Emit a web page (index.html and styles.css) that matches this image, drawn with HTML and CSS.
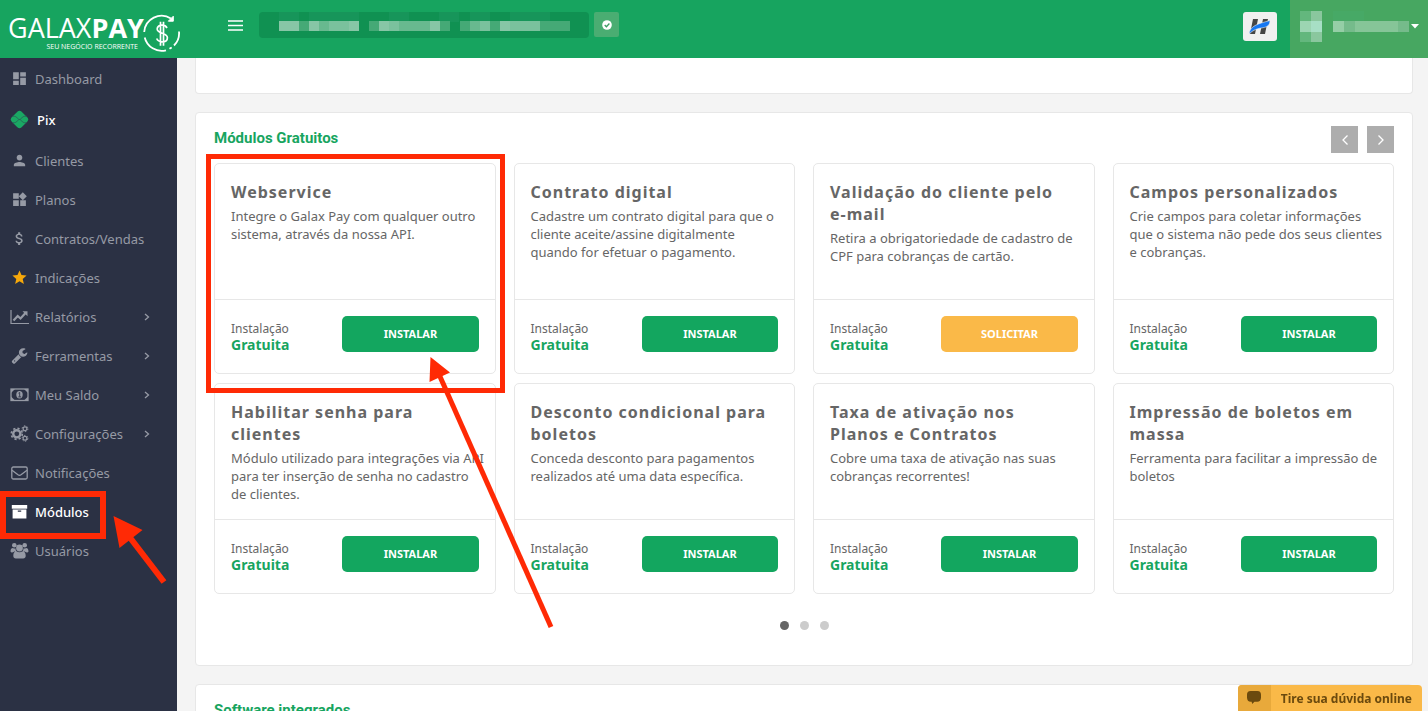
FILE: index.html
```html
<!DOCTYPE html>
<html lang="pt-BR">
<head>
<meta charset="utf-8">
<title>Galax Pay - Módulos</title>
<link rel="stylesheet" href="styles.css">
</head>
<body>
<header class="topbar">
  <a class="brand" href="#" aria-label="Galax Pay">
    <span class="brand-text">
      <span class="brand-name">GALAX<b>PAY</b></span>
      <span class="brand-tag">SEU NEGÓCIO RECORRENTE</span>
    </span>
    <svg class="brand-mark" viewBox="0 0 38 38" fill="none" stroke="#fff">
      <path d="M28 4.500A17.500 17.500 0 0 0 1.200 18M1.700 23.500A17.500 17.500 0 0 0 23 36.300M26.500 34.800l2.200-1.400M31 31.500A17.500 17.500 0 0 0 36 17.500" stroke-width="1.800"/>
      <path d="M30.300 2.200v5h-5z" fill="#fff" stroke-width="1"/>
      <path d="M24 14c-1-2-2.700-2.800-5-2.800-2.900 0-4.800 1.500-4.800 3.900 0 5.200 10.200 3 10.200 8.600 0 2.500-2.200 4.100-5.200 4.100-2.800 0-4.600-1.100-5.500-3.300M17.500 7.700v24M20.500 7.700v24" stroke-width="1.700"/>
    </svg>
  </a>
  <button class="menu-btn" aria-label="Menu"><svg viewBox="0 0 15 11"><path d="M0 1h15M0 5.500h15M0 10h15" stroke="#fff" stroke-width="1.500"/></svg></button>
  <div class="account">
    <svg viewBox="0 0 330 26" shape-rendering="crispEdges">
      <g fill="#17955a"><path d="M20 0h20v10h-20zM50 0h50v10h-50zM130 0h20v10h-20zM180 0h20v10h-20zM211 0h20v10h-20zM251 0h40v10h-40z"/></g>
      <path fill="#87c6a6" d="M20 9h20v10h-20zM50 9h10v10h-10zM90 9h10v10h-10zM120 9h10v10h-10zM171 9h10v10h-10zM241 9h10v10h-10z"/>
      <path fill="#7ac19d" d="M70 9h20v10h-20zM130 9h10v10h-10zM221 9h10v10h-10zM251 9h30v10h-30z"/>
      <path fill="#68b98f" d="M60 9h10v10h-10zM140 9h31v10h-31zM211 9h10v10h-10z"/>
      <path fill="#45a976" d="M40 9h10v10h-10zM110 9h10v10h-10zM181 9h10v10h-10zM201 9h10v10h-10zM231 9h10v10h-10zM281 9h30v10h-30z"/>
    </svg>
  </div>
  <button class="check-btn" aria-label="Verificado"><svg viewBox="0 0 10 10"><circle cx="5" cy="5" r="4.800" fill="#fff"/><path d="M2.700 5l1.700 1.700 3-3.200" fill="none" stroke="#3c9c62" stroke-width="1.300"/></svg></button>
  <a class="partner" href="#" aria-label="Parceiro">
    <svg viewBox="0 0 22 17"><path d="M4 1h5L6 16H1zM14 1h5l-3 15h-5z" fill="#454545"/><path d="M0 16C1 8 8 6 21 2.500c0 4.500-2.500 6.500-7 7.200C8 10.500 4 12 0 16z" fill="#1677f2" stroke="#eee" stroke-width=".6"/></svg>
  </a>
  <button class="user" aria-label="Conta">
    <svg viewBox="0 0 110 32" shape-rendering="crispEdges">
      <path fill="#63b77d" d="M0 0h11v11H0zM0 21h11v10H0z"/><path fill="#8ac79e" d="M11 0h11v11H11zM11 21h11v10H11z"/>
      <path fill="#9cd5b2" d="M0 10h11v11H0z"/><path fill="#a7dfc5" d="M11 10h11v11H11z"/>
      <path fill="#95cea6" d="M33 10h11v11H33z"/><path fill="#86c598" d="M44 10h54v11H44z"/><path fill="#75bb8b" d="M98 10h11v11H98zM44 10h11v11H44z"/>
      <path fill="#47a966" d="M33 0h31v10H33z"/>
    </svg>
    <svg class="caret" viewBox="0 0 8 5"><path d="M0 0h8L4 4.500z" fill="#fff"/></svg>
  </button>
</header>

<div class="shell">
  <nav class="sidebar">
    <ul class="menu">
      <li><a href="#"><span class="icon"><svg class="md" viewBox="0 0 24 24"><path d="M3 13h8V3H3v10zm0 8h8v-6H3v6zm10 0h8V11h-8v10zm0-18v6h8V3h-8z"/></svg></span>Dashboard</a></li>
      <li><a class="pix active" href="#"><span class="icon"><svg class="fa" viewBox="0 0 20 20"><rect x="2.700" y="2.700" width="14.600" height="14.600" rx="3.200" transform="rotate(45 10 10)" fill="#1aa864"/><path d="M2 6.600h2.600c1.200 0 2 .8 2.800 1.500L9 9.600c.6.500 1.400.5 2 0l1.600-1.500c.8-.7 1.600-1.500 2.800-1.500H18M2 13.400h2.600c1.200 0 2-.8 2.800-1.500L9 10.400c.6-.5 1.400-.5 2 0l1.600 1.500c.8.700 1.600 1.500 2.800 1.500H18" fill="none" stroke="#2b5b54" stroke-width=".8"/></svg></span>Pix</a></li>
      <li><a href="#"><span class="icon"><svg class="md" viewBox="0 0 24 24"><path d="M12 12c2.210 0 4-1.790 4-4s-1.790-4-4-4-4 1.790-4 4 1.790 4 4 4zm0 2c-2.670 0-8 1.340-8 4v2h16v-2c0-2.660-5.330-4-8-4z"/></svg></span>Clientes</a></li>
      <li><a href="#"><span class="icon"><svg class="md" viewBox="0 0 24 24"><path d="M13 13v8h8v-8h-8zM3 21h8v-8H3v8zM3 3v8h8V3H3zm13.660-1.310L11 7.340 16.660 13l5.660-5.660-5.660-5.650z"/></svg></span>Planos</a></li>
      <li><a href="#"><span class="icon"><svg class="md" viewBox="0 0 24 24"><path d="M11.800 10.900c-2.270-.59-3-1.200-3-2.150 0-1.090 1.010-1.850 2.700-1.850 1.780 0 2.440.85 2.500 2.100h2.210c-.07-1.720-1.120-3.300-3.210-3.810V3h-3v2.160c-1.940.42-3.500 1.680-3.500 3.610 0 2.310 1.910 3.460 4.700 4.130 2.500.6 3 1.480 3 2.410 0 .69-.49 1.790-2.700 1.790-2.060 0-2.870-.92-2.980-2.100h-2.200c.12 2.190 1.760 3.420 3.680 3.830V21h3v-2.150c1.950-.37 3.500-1.500 3.500-3.550 0-2.840-2.430-3.810-4.700-4.400z"/></svg></span>Contratos/Vendas</a></li>
      <li><a href="#"><span class="icon star"><svg class="md" viewBox="0 0 24 24"><path d="M12 17.270L18.180 21l-1.640-7.030L22 9.240l-7.190-.61L12 2 9.190 8.630 2 9.240l5.460 4.730L5.820 21z"/></svg></span>Indicações</a></li>
      <li><a href="#"><span class="icon"><svg class="fa" viewBox="0 0 19 19"><path d="M1 3v13.500h18" fill="none" stroke="currentColor" stroke-width="1.200"/><path d="M3.500 13.500l4.200-4.500 2.800 2.500 5-5.500" fill="none" stroke="currentColor" stroke-width="2.200"/><path d="M12.500 4.200h5v5z"/></svg></span>Relatórios<svg class="arrow" viewBox="0 0 6 8"><path d="M1 1l3.500 3L1 7"/></svg></a></li>
      <li><a href="#"><span class="icon"><svg class="md" viewBox="0 0 1792 1792"><path d="M448 1472q0-26-19-45t-45-19-45 19-19 45 19 45 45 19 45-19 19-45zm644-420l-682 682q-37 37-90 37-52 0-91-37l-106-108q-38-36-38-90 0-53 38-91l681-681q39 98 114.500 173.500t173.500 114.500zm634-435q0 39-23 106-47 134-164.500 217.500t-258.500 83.500q-185 0-316.500-131.500t-131.500-316.500 131.500-316.500 316.500-131.500q58 0 121.500 16.500t107.500 46.500q16 11 16 28t-16 28l-293 169v224l193 107q5-3 79-48.500t135.500-81 70.500-35.500q15 0 23.500 10t8.500 25z"/></svg></span>Ferramentas<svg class="arrow" viewBox="0 0 6 8"><path d="M1 1l3.500 3L1 7"/></svg></a></li>
      <li><a href="#"><span class="icon"><svg class="fa" viewBox="0 0 19 19"><rect x="1" y="4" width="17" height="11.500" fill="none" stroke="currentColor" stroke-width="1.300"/><path d="M1 4h4L1 8zM18 4v4l-4-4zM1 15.500v-4l4 4zM18 15.500h-4l4-4z"/><ellipse cx="9.500" cy="9.700" rx="3.200" ry="3.700"/><path d="M8.500 8.200l1.200-.7v4.200M8.300 11.900h2.800" fill="none" stroke="#2b3144" stroke-width=".9"/></svg></span>Meu Saldo<svg class="arrow" viewBox="0 0 6 8"><path d="M1 1l3.500 3L1 7"/></svg></a></li>
      <li><a href="#"><span class="icon"><svg class="fa" viewBox="0 0 19 19"><g fill="none" stroke="currentColor"><circle cx="6.800" cy="9.800" r="3.600" stroke-width="2.400"/><circle cx="6.800" cy="9.800" r="5.500" stroke-width="1.700" stroke-dasharray="2.160 2.160"/><circle cx="15" cy="4.700" r="1.900" stroke-width="1.200"/><circle cx="15" cy="4.700" r="2.900" stroke-width="1" stroke-dasharray="1.520 1.520"/><circle cx="15" cy="14.300" r="1.900" stroke-width="1.200"/><circle cx="15" cy="14.300" r="2.900" stroke-width="1" stroke-dasharray="1.520 1.520"/></g></svg></span>Configurações<svg class="arrow" viewBox="0 0 6 8"><path d="M1 1l3.500 3L1 7"/></svg></a></li>
      <li><a href="#"><span class="icon"><svg class="fa" viewBox="0 0 19 19"><rect x="1.800" y="4" width="15.400" height="12" rx="1.500" fill="none" stroke="currentColor" stroke-width="1.300"/><path d="M2 7.200l6 4.600q1.500 1 3 0l6-4.600" fill="none" stroke="currentColor" stroke-width="1.300"/></svg></span>Notificações</a></li>
      <li><a class="active" href="#"><span class="icon"><svg class="fa" viewBox="0 0 19 19"><path d="M1.800 3h15.400v3.700H1.800z"/><path fill-rule="evenodd" d="M2.600 7.500h13.800v9H2.600zM7.800 8.400v1.300h3.400V8.400z"/></svg></span>Módulos</a></li>
      <li><a href="#"><span class="icon"><svg class="fa" viewBox="0 0 19 19"><circle cx="4.300" cy="4.300" r="2.300"/><circle cx="14.700" cy="4.300" r="2.300"/><circle cx="9.500" cy="7" r="3.400"/><path d="M.5 10.500C.5 8 1.500 7 3 7c.9.600 1.800.6 2.500.3 0 1.500.5 2.500 1.200 3.200H4.300C3 11.500 1 12 .5 10.500zM18.500 10.500C18.500 8 17.500 7 16 7c-.9.600-1.800.6-2.500.3 0 1.500-.5 2.500-1.200 3.200h2.400c1.300 1 3.300 1.500 3.800 0zM3.300 14.800c0-3 1.200-4.600 3.200-4.600 1.800 1.500 4.200 1.500 6 0 2 0 3.200 1.600 3.200 4.600 0 1.700-1 2.700-2.500 2.700H5.800c-1.500 0-2.500-1-2.500-2.700z"/></svg></span>Usuários</a></li>
    </ul>
  </nav>

  <main class="content">
    <section class="panel panel-tail"></section>

    <section class="panel">
      <div class="panel-head">
        <h2>Módulos Gratuitos</h2>
        <div class="pager">
          <button aria-label="Anterior"><svg viewBox="0 0 8 12"><path d="M6.500 1.500L2 6l4.500 4.500"/></svg></button>
          <button aria-label="Próximo"><svg viewBox="0 0 8 12"><path d="M1.500 1.500L6 6l-4.500 4.500"/></svg></button>
        </div>
      </div>
      <div class="cards">
        <article class="card"><div class="card-body"><h3>Webservice</h3><p>Integre o Galax Pay com qualquer outro sistema, através da nossa API.</p></div><div class="card-foot"><div class="price">Instalação<strong>Gratuita</strong></div><button class="btn">INSTALAR</button></div></article>
        <article class="card"><div class="card-body"><h3>Contrato digital</h3><p>Cadastre um contrato digital para que o cliente aceite/assine digitalmente quando for efetuar o pagamento.</p></div><div class="card-foot"><div class="price">Instalação<strong>Gratuita</strong></div><button class="btn">INSTALAR</button></div></article>
        <article class="card"><div class="card-body"><h3>Validação do cliente pelo <span class="nowrap">e-mail</span></h3><p>Retira a obrigatoriedade de cadastro de CPF para cobranças de cartão.</p></div><div class="card-foot"><div class="price">Instalação<strong>Gratuita</strong></div><button class="btn btn-request">SOLICITAR</button></div></article>
        <article class="card"><div class="card-body"><h3>Campos personalizados</h3><p>Crie campos para coletar informações que o sistema não pede dos seus clientes e cobranças.</p></div><div class="card-foot"><div class="price">Instalação<strong>Gratuita</strong></div><button class="btn">INSTALAR</button></div></article>
        <article class="card"><div class="card-body"><h3>Habilitar senha para clientes</h3><p>Módulo utilizado para integrações via API para ter inserção de senha no cadastro de clientes.</p></div><div class="card-foot"><div class="price">Instalação<strong>Gratuita</strong></div><button class="btn">INSTALAR</button></div></article>
        <article class="card"><div class="card-body"><h3>Desconto condicional para boletos</h3><p>Conceda desconto para pagamentos realizados até uma data específica.</p></div><div class="card-foot"><div class="price">Instalação<strong>Gratuita</strong></div><button class="btn">INSTALAR</button></div></article>
        <article class="card"><div class="card-body"><h3>Taxa de ativação nos Planos e Contratos</h3><p>Cobre uma taxa de ativação nas suas cobranças recorrentes!</p></div><div class="card-foot"><div class="price">Instalação<strong>Gratuita</strong></div><button class="btn">INSTALAR</button></div></article>
        <article class="card"><div class="card-body"><h3>Impressão de boletos em massa</h3><p>Ferramenta para facilitar a impressão de boletos</p></div><div class="card-foot"><div class="price">Instalação<strong>Gratuita</strong></div><button class="btn">INSTALAR</button></div></article>
      </div>
      <div class="dots">
        <button class="dot current" aria-label="Página 1"></button>
        <button class="dot" aria-label="Página 2"></button>
        <button class="dot" aria-label="Página 3"></button>
      </div>
    </section>

    <section class="panel">
      <div class="panel-head"><h2>Software integrados</h2></div>
    </section>
  </main>
</div>

<button class="chat">
  <span class="chat-icon"><svg viewBox="0 0 15 15"><path d="M4 0h7c3 0 4 1.500 4 4v3c0 3-1.500 4.500-4 4.500H8L5.500 14 5 11.500H4c-2.500 0-4-1.500-4-4.500V4c0-2.500 1-4 4-4z"/></svg></span>
  <span class="chat-text">Tire sua dúvida online</span>
</button>

<!-- tutorial highlights -->
<svg class="marks" aria-hidden="true">
  <g fill="none" stroke="#ff2a05">
    <rect x="208.500" y="156.500" width="294" height="234" stroke-width="5"/>
    <rect x="3" y="494" width="100" height="42" stroke-width="6"/>
    <path d="M438 372L551 627" stroke-width="5"/>
    <path d="M128 535L164 582" stroke-width="6"/>
  </g>
  <path d="M430.500 357l19.500 15.500-20.500 9.500zM113.500 516l29 14-23 18z" fill="#ff2a05"/>
</svg>
</body>
</html>
```

FILE: styles.css
```css
* { box-sizing: border-box; }

body {
  margin: 0;
  height: 100vh;
  display: flex;
  flex-direction: column;
  overflow: hidden;
  background: #f4f4f4;
  font-family: "Noto Sans", sans-serif;
  font-size: 13px;
  color: #666;
}

button {
  border: 0;
  padding: 0;
  background: none;
  font: inherit;
  color: inherit;
  cursor: pointer;
}

a { color: inherit; text-decoration: none; }
h2, h3, p, ul { margin: 0; padding: 0; }
svg { display: block; }

/* top bar */
.topbar {
  flex: none;
  display: flex;
  align-items: flex-start;
  height: 58px;
  background: #17a45f;
}

.brand {
  display: flex;
  gap: 1px;
  width: 228px;
  padding: 13px 0 0 8px;
  color: #fff;
}

.brand-text { display: flex; flex-direction: column; width: 134px; }
.brand-name {
  font-family: "Open Sans", sans-serif;
  font-size: 27px;
  line-height: 29px;
  white-space: nowrap;
}
.brand-tag {
  align-self: flex-end;
  margin-right: 4px;
  font-family: "Open Sans", sans-serif;
  font-size: 7px;
  line-height: 9px;
  white-space: nowrap;
}
.brand-mark { width: 38px; height: 38px; margin-top: 1px; }

.menu-btn { width: 15px; margin-top: 20px; }
.menu-btn svg { width: 15px; height: 11px; }

.account {
  width: 330px;
  height: 26px;
  margin: 12px 5px 0 16px;
  border-radius: 4px;
  background: #109152;
}
.account svg { width: 330px; height: 26px; }

.check-btn {
  display: grid;
  place-items: center;
  width: 25px;
  height: 25px;
  margin-top: 12px;
  border-radius: 2px;
  background: #4aad72;
}
.check-btn svg { width: 10px; height: 10px; }

.partner {
  display: grid;
  place-items: center;
  width: 34px;
  height: 29px;
  margin: 12px 13px 0 auto;
  border-radius: 3px;
  background: #f0f0f0;
}
.partner svg { width: 22px; height: 17px; }

.user {
  display: flex;
  gap: 1px;
  width: 138px;
  height: 58px;
  padding: 11px 0 0 10px;
  background: #47a761;
}
.user svg { width: 110px; height: 32px; }
.user .caret { width: 8px; height: 5px; margin-top: 13px; }

/* layout */
.shell { flex: 1; display: flex; min-height: 0; }

.sidebar {
  flex: none;
  width: 177px;
  background: #2b3144;
}

.menu { list-style: none; padding-top: 1px; }
.menu a {
  display: flex;
  align-items: center;
  gap: 5px;
  height: 39px;
  padding: 0 27px 0 9px;
  color: #969aa5;
}
.menu .active { color: #fff; font-weight: 500; }
.menu .pix { height: 43px; gap: 7px; }

.icon { display: grid; place-items: center; width: 21px; }
.icon svg { fill: currentColor; }
.md { width: 17px; height: 17px; }
.fa { width: 19px; height: 19px; }
.star { color: #f6a80b; }
.arrow {
  width: 6px;
  height: 8px;
  margin-left: auto;
  fill: none;
  stroke: currentColor;
  stroke-width: 1.3;
}

.content {
  flex: 1;
  min-width: 0;
  display: flex;
  flex-direction: column;
  gap: 18px;
  padding: 0 15px 0 18px;
  overflow: hidden;
}

/* panels */
.panel {
  flex: none;
  padding: 13px 18px 35px;
  border: 1px solid #e7e7e7;
  border-radius: 4px;
  background: #fff;
}
.panel-tail { height: 36px; padding: 0; border-top: 0; border-radius: 0 0 4px 4px; }

.panel-head {
  display: flex;
  justify-content: space-between;
  min-height: 27px;
  margin-bottom: 10px;
}
.panel-head h2 {
  font-family: Roboto, sans-serif;
  font-size: 15px;
  font-weight: 700;
  line-height: 24px;
  color: #17a55f;
}

.pager { display: flex; gap: 9px; }
.pager button {
  display: grid;
  place-items: center;
  width: 27px;
  height: 27px;
  background: #adadad;
}
.pager svg {
  width: 8px;
  height: 12px;
  fill: none;
  stroke: #fff;
  stroke-width: 1.3;
}

/* module cards */
.cards {
  display: grid;
  grid-template-columns: repeat(4, 1fr);
  gap: 9px 18px;
}
.card {
  display: flex;
  flex-direction: column;
  border: 1px solid #e7e7e7;
  border-radius: 5px;
}
.card-body {
  flex: 1;
  min-height: 136px;
  padding: 17px 10px 14px 16px;
  border-bottom: 1px solid #e7e7e7;
}
.card h3 {
  margin-bottom: 4px;
  padding-right: 8px;
  font-size: 16px;
  line-height: 22px;
  letter-spacing: 1px;
}
.card p { line-height: 18px; }
.nowrap { white-space: nowrap; }

.card-foot {
  display: flex;
  justify-content: space-between;
  align-items: flex-start;
  padding: 16px 16px 20px;
}
.price {
  padding-top: 5px;
  font-size: 12px;
  line-height: 16px;
}
.price strong { display: block; font-size: 14px; color: #17a55f; }

.btn {
  width: 55%;
  height: 36px;
  padding-bottom: 2px;
  border-radius: 5px;
  background: #13a65f;
  color: #fff;
  font-size: 11px;
  font-weight: 700;
}
.btn-request { background: #fab948; }

.dots {
  display: flex;
  justify-content: center;
  gap: 11px;
  margin-top: 27px;
}
.dot {
  width: 9px;
  height: 9px;
  border-radius: 50%;
  background: #ccc;
}
.dot.current { background: #666; }

/* chat launcher */
.chat {
  position: fixed;
  right: 6px;
  bottom: 0;
  display: flex;
  height: 26px;
  border-radius: 4px 4px 0 0;
  overflow: hidden;
  background: #fab948;
  color: #6b4a0e;
}
.chat-icon {
  display: grid;
  place-items: center;
  width: 33px;
  height: 26px;
  background: #e8a93b;
}
.chat-icon svg { width: 14px; height: 14px; fill: currentColor; }
.chat-text {
  padding: 0 10px;
  font-size: 12px;
  font-weight: 700;
  line-height: 28px;
}

.marks {
  position: absolute;
  top: 0;
  left: 0;
  width: 100%;
  height: 100%;
  pointer-events: none;
}
```
